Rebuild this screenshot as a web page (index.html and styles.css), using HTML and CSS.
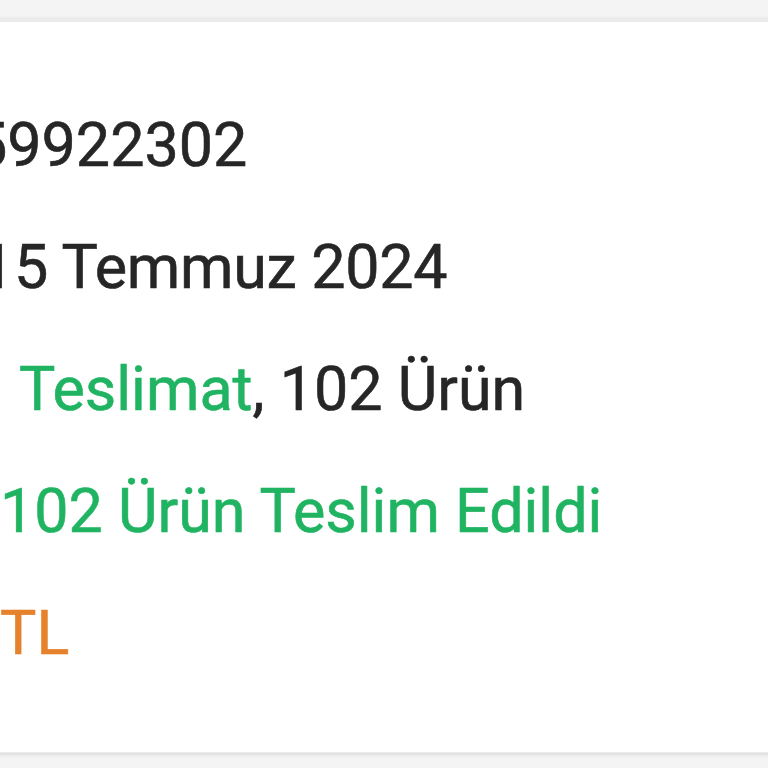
FILE: index.html
```html
<!DOCTYPE html>
<html lang="tr">
<head>
<meta charset="utf-8">
<link rel="stylesheet" href="styles.css">
</head>
<body>
<div class="page">
  <div class="card">
    <div class="row row-1"><span class="dark">59922302</span></div>
    <div class="row row-2"><span class="dark">15 Temmuz 2024</span></div>
    <div class="row row-3"><span class="green">Teslimat</span><span class="dark">, 102 Ürün</span></div>
    <div class="row row-4"><span class="green">102 Ürün Teslim Edildi</span></div>
    <div class="row row-5"><span class="orange">TL</span></div>
  </div>
</div>
</body>
</html>
```
FILE: styles.css
```css
html, body {
  margin: 0;
  padding: 0;
  width: 768px;
  height: 768px;
  overflow: hidden;
  background: #f4f4f4;
}
.page {
  padding-top: 18px;
}
.card {
  background: #ffffff;
  margin: 0 -20px;
  padding: 62px 20px 58px;
  box-shadow: 0 0 0 1px #ececec, 0 2px 5px rgba(0,0,0,0.14);
  border-top: 4px solid #ebebeb;
  overflow: hidden;
  font-family: Roboto, "Noto Sans", sans-serif;
  font-size: 61px;
  line-height: 122px;
  -webkit-text-stroke: 0.6px currentColor;
}
.row {
  white-space: nowrap;
}
.row-1 { margin-left: -27px; }
.row-2 { margin-left: -20px; letter-spacing: -0.3px; }
.row-3 { margin-left: 19px; }
.row-4 { margin-left: 0; }
.row-5 { margin-left: 0; }
.dark { color: #262626; }
.green { color: #20b462; }
.orange { color: #e6822c; }
```
